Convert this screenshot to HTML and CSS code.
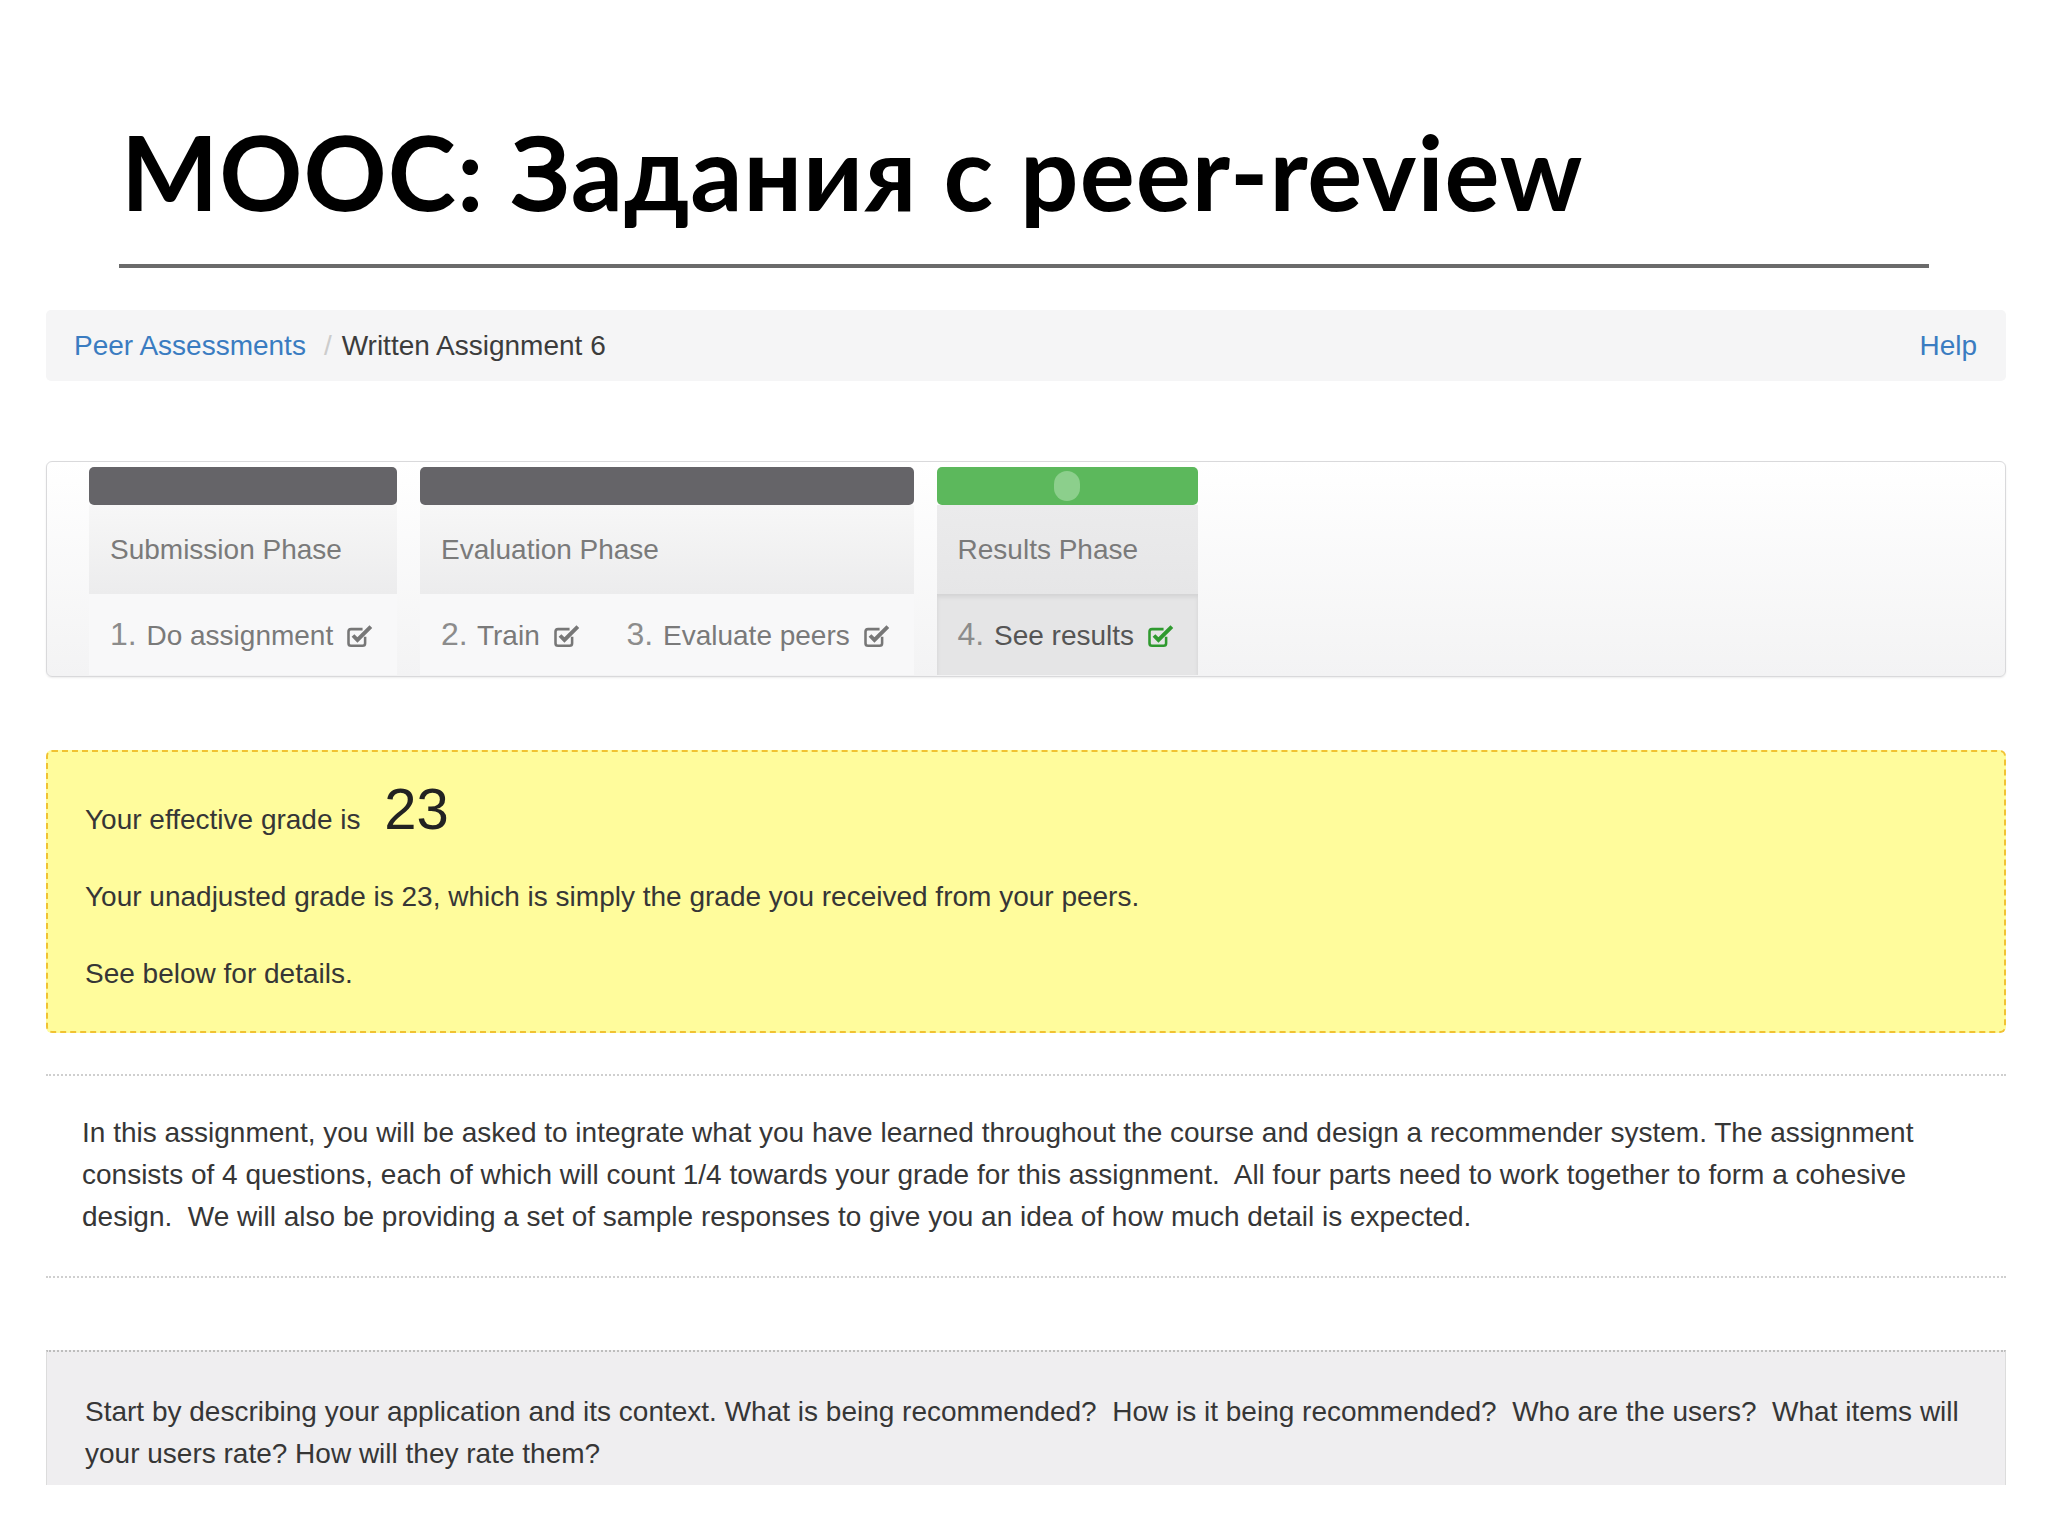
FILE: index.html
```html
<!DOCTYPE html>
<html lang="ru">
<head>
    <meta charset="UTF-8">
    <meta name="viewport" content="width=device-width, initial-scale=1.0">
    <title>MOOC: Задания с peer-review</title>
    <link rel="stylesheet" href="styles.css">
</head>
<body>
    <header class="slide-head">
        <h1 class="slide-title">MOOC: Задания с peer-review</h1>
        <div class="slide-rule"></div>
    </header>

    <main class="page">
        <div class="crumbs">
            <div class="crumbs-path">
                <a href="#">Peer Assessments</a><span class="crumbs-sep">/</span><span class="crumbs-current">Written Assignment 6</span>
            </div>
            <a class="crumbs-help" href="#">Help</a>
        </div>

        <div class="phases">
            <div class="phase">
                <div class="phase-bar"></div>
                <div class="phase-name">Submission Phase</div>
                <div class="phase-steps">
                    <span class="step"><span class="step-num">1.</span> Do assignment
                        <svg class="check" viewBox="0 0 20 18"><path d="M14 10v5a2 2 0 0 1-2 2H3a2 2 0 0 1-2-2V6a2 2 0 0 1 2-2h9" /><path class="tick" d="M4.5 9l3.5 3.5L18.5 2" /></svg>
                    </span>
                </div>
            </div>
            <div class="phase">
                <div class="phase-bar"></div>
                <div class="phase-name">Evaluation Phase</div>
                <div class="phase-steps">
                    <span class="step"><span class="step-num">2.</span> Train
                        <svg class="check" viewBox="0 0 20 18"><path d="M14 10v5a2 2 0 0 1-2 2H3a2 2 0 0 1-2-2V6a2 2 0 0 1 2-2h9" /><path class="tick" d="M4.5 9l3.5 3.5L18.5 2" /></svg>
                    </span>
                    <span class="step"><span class="step-num">3.</span> Evaluate peers
                        <svg class="check" viewBox="0 0 20 18"><path d="M14 10v5a2 2 0 0 1-2 2H3a2 2 0 0 1-2-2V6a2 2 0 0 1 2-2h9" /><path class="tick" d="M4.5 9l3.5 3.5L18.5 2" /></svg>
                    </span>
                </div>
            </div>
            <div class="phase phase-current">
                <div class="phase-bar"><span class="phase-knob"></span></div>
                <div class="phase-name">Results Phase</div>
                <div class="phase-steps">
                    <span class="step"><span class="step-num">4.</span> See results
                        <svg class="check" viewBox="0 0 20 18"><path d="M14 10v5a2 2 0 0 1-2 2H3a2 2 0 0 1-2-2V6a2 2 0 0 1 2-2h9" /><path class="tick" d="M4.5 9l3.5 3.5L18.5 2" /></svg>
                    </span>
                </div>
            </div>
        </div>

        <div class="grade-box">
            <p>Your effective grade is <span class="grade-value">23</span></p>
            <p>Your unadjusted grade is 23, which is simply the grade you received from your peers.</p>
            <p>See below for details.</p>
        </div>

        <div class="description">
            <p>In this assignment, you will be asked to integrate what you have learned throughout the course and design a recommender system. The assignment consists of 4 questions, each of which will count 1/4 towards your grade for this assignment.&nbsp; All four parts need to work together to form a cohesive design.&nbsp; We will also be providing a set of sample responses to give you an idea of how much detail is expected.</p>
        </div>

        <div class="question">
            <p>Start by describing your application and its context. What is being recommended?&nbsp; How is it being recommended?&nbsp; Who are the users?&nbsp; What items will your users rate? How will they rate them?</p>
        </div>
    </main>
</body>
</html>
```

FILE: styles.css
```css
* {
    margin: 0;
    padding: 0;
    box-sizing: border-box;
}

body {
    background: #ffffff;
    color: #363636;
    font-family: "Liberation Sans", Arial, sans-serif;
    font-size: 28px;
    overflow: hidden;
}

a {
    color: #3a7cc1;
    text-decoration: none;
}

/* slide header */

.slide-head {
    margin-left: 119px;
    width: 1810px;
    padding-top: 110px;
}

.slide-title {
    font-family: Lato, "Open Sans", sans-serif;
    font-weight: 700;
    font-size: 103px;
    line-height: 1.2;
    letter-spacing: 1px;
    color: #000000;
    padding-left: 2px;
}

.slide-rule {
    height: 4px;
    margin-top: 30px;
    background: #6b6b6b;
}

/* screenshot area */

.page {
    margin-left: 46px;
    width: 1960px;
}

.crumbs {
    display: flex;
    justify-content: space-between;
    margin-top: 42px;
    height: 71px;
    line-height: 71px;
    padding: 0 29px 0 28px;
    background: #f5f5f6;
    border-radius: 5px;
}

.crumbs-sep {
    color: #cccccc;
    margin: 0 10px 0 18px;
}

.crumbs-current {
    color: #3c3c3c;
}

/* phases */

.phases {
    display: flex;
    gap: 23px;
    margin-top: 80px;
    height: 216px;
    padding: 5px 42px 1px;
    border: 1px solid #d9d9db;
    border-radius: 6px;
    background: linear-gradient(#ffffff, #f3f3f4);
    box-shadow: 0 1px 2px rgba(0, 0, 0, 0.08);
}

.phase {
    display: flex;
    flex-direction: column;
    color: #7a7a7a;
}

.phase-bar {
    display: flex;
    justify-content: center;
    align-items: center;
    height: 38px;
    background: #656468;
    border-radius: 5px;
}

.phase-current .phase-bar {
    background: #5cb85c;
}

.phase-knob {
    width: 26px;
    height: 30px;
    border-radius: 13px;
    background: #8ccf8c;
}

.phase-name {
    height: 89px;
    line-height: 89px;
    padding: 0 21px;
    background: linear-gradient(#f7f7f7, #ececed);
}

.phase-current .phase-name {
    background: linear-gradient(#ebebec, #e6e6e7);
}

.phase-steps {
    display: flex;
    gap: 47px;
    height: 81px;
    line-height: 81px;
    padding: 0 24px 0 21px;
    background: #f8f8f9;
}

.phase-current .phase-steps {
    background: #e5e5e6;
    box-shadow: inset 0 3px 4px rgba(0, 0, 0, 0.08);
    color: #555555;
}

.step {
    white-space: nowrap;
}

.step-num {
    font-size: 32px;
    color: #8c8c8c;
    margin-right: 2px;
}

.check {
    width: 26px;
    height: 23px;
    margin-left: 6px;
    vertical-align: -2px;
    fill: none;
    stroke: #777777;
    stroke-width: 2;
}

.check .tick {
    stroke-width: 3;
}

.phase-current .check {
    stroke: #2f9a2f;
}

/* grade */

.grade-box {
    margin-top: 73px;
    padding: 28px 37px 19px;
    border: 2px dashed #f1c232;
    border-radius: 6px;
    background: #fffc9c;
    line-height: 77px;
}

.grade-value {
    font-size: 58px;
    line-height: 1;
    margin-left: 16px;
    color: #222222;
}

/* assignment text */

.description {
    margin-top: 41px;
    padding: 36px 36px 38px;
    border-top: 2px dotted #cfcfcf;
    border-bottom: 2px dotted #cfcfcf;
    line-height: 42px;
}

.question {
    margin-top: 72px;
    padding: 39px 36px 10px 38px;
    border-top: 2px dotted #bdbdbd;
    border-left: 1px solid #dcdcdc;
    border-right: 1px solid #dcdcdc;
    background: #efeef0;
    line-height: 42px;
}
```
